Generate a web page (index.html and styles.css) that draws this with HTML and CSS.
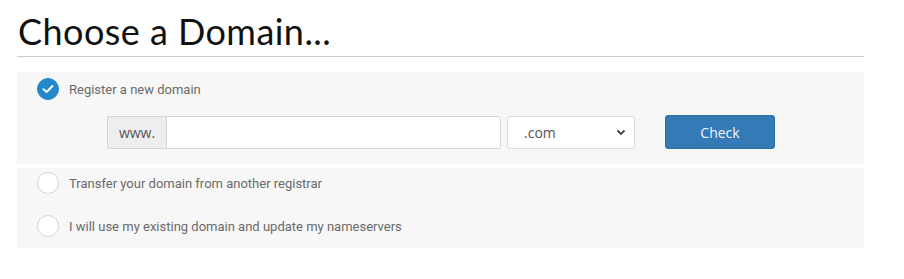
FILE: index.html
```html
<!DOCTYPE html>
<html>
	<head>
		<meta name="viewport" content="width=device-width, initial-scale=1">
		<meta charset="UTF-8">
		<title>Choose a Domain</title>
		<link rel="stylesheet" href="styles.css">
	</head>
	<body>
		<div class="wrapper">
			<h1 class="title">Choose a Domain...</h1>

			<div class="domain-panel">
				<div class="option option-active">
					<div class="option-label">
						<span class="radio radio-checked">
							<svg width="12" height="10" viewBox="0 0 12 10"><path d="M1.5 5.2 L4.6 8 L10.5 2" fill="none" stroke="#fff" stroke-width="2" stroke-linecap="round" stroke-linejoin="round"/></svg>
						</span>
						<span>Register a new domain</span>
					</div>
					<div class="search-row">
						<div class="input-group">
							<span class="addon">www.</span>
							<input class="domain-input" type="text">
						</div>
						<div class="tld-select">
							<span>.com</span>
							<svg width="10" height="7" viewBox="0 0 10 7"><path d="M1.5 1.5 L5 5 L8.5 1.5" fill="none" stroke="#444" stroke-width="1.8"/></svg>
						</div>
						<button class="check-btn">Check</button>
					</div>
				</div>

				<div class="option option-second">
					<div class="option-label">
						<span class="radio"></span>
						<span>Transfer your domain from another registrar</span>
					</div>
				</div>

				<div class="option option-third">
					<div class="option-label">
						<span class="radio"></span>
						<span>I will use my existing domain and update my nameservers</span>
					</div>
				</div>
			</div>
		</div>
	</body>
</html>
```

FILE: styles.css
```css
* {
	box-sizing: border-box;
	margin: 0;
	padding: 0;
}
body, html {
	background: #fff;
}
.wrapper {
	width: 847px;
	margin-left: 17px;
}
.title {
	font-family: 'Lato', sans-serif;
	font-weight: 400;
	font-size: 36px;
	letter-spacing: 0.45px;
	color: #111;
	line-height: 44px;
	padding: 9px 0 3px 1px;
	border-bottom: 1px solid #ccc;
}
.domain-panel {
	margin-top: 15px;
}
.option {
	background: #f7f7f7;
	padding: 6px 20px 0;
	font-family: 'Roboto', sans-serif;
	font-size: 13px;
	color: #6a6a6a;
}
.option-active {
	height: 92px;
	margin-bottom: 4px;
}
.option-second {
	height: 37px;
	padding-top: 4px;
}
.option-third {
	height: 43px;
	padding-top: 10px;
}
.option-label {
	display: flex;
	align-items: center;
	gap: 10px;
}
.radio {
	width: 22px;
	height: 22px;
	border-radius: 50%;
	border: 1px solid #d4d4d4;
	background: #fff;
	display: flex;
	align-items: center;
	justify-content: center;
}
.radio-checked {
	background: #2387cc;
	border-color: #2387cc;
}
.search-row {
	display: flex;
	align-items: center;
	margin: 15px 0 0 70px;
}
.input-group {
	display: flex;
	height: 33px;
}
.addon {
	width: 59px;
	background: #eee;
	border: 1px solid #d6d6d6;
	border-right: none;
	border-radius: 3px 0 0 3px;
	display: flex;
	align-items: center;
	justify-content: center;
	font-family: 'Open Sans', sans-serif;
	font-size: 14px;
	color: #555;
}
.domain-input {
	width: 335px;
	border: 1px solid #d6d6d6;
	border-radius: 0 3px 3px 0;
	background: #fff;
	outline: none;
}
.tld-select {
	width: 128px;
	height: 33px;
	margin-left: 6px;
	background: #fff;
	border: 1px solid #ddd;
	border-radius: 3px;
	display: flex;
	align-items: center;
	justify-content: space-between;
	padding: 0 8px 0 16px;
	font-family: 'Open Sans', sans-serif;
	font-size: 14px;
	color: #555;
}
.check-btn {
	width: 110px;
	height: 34px;
	margin-left: 30px;
	background: #337ab7;
	border: 1px solid #2e6da4;
	border-radius: 3px;
	color: #eef6ff;
	font-family: 'Open Sans', sans-serif;
	font-size: 14px;
	cursor: pointer;
}
```
